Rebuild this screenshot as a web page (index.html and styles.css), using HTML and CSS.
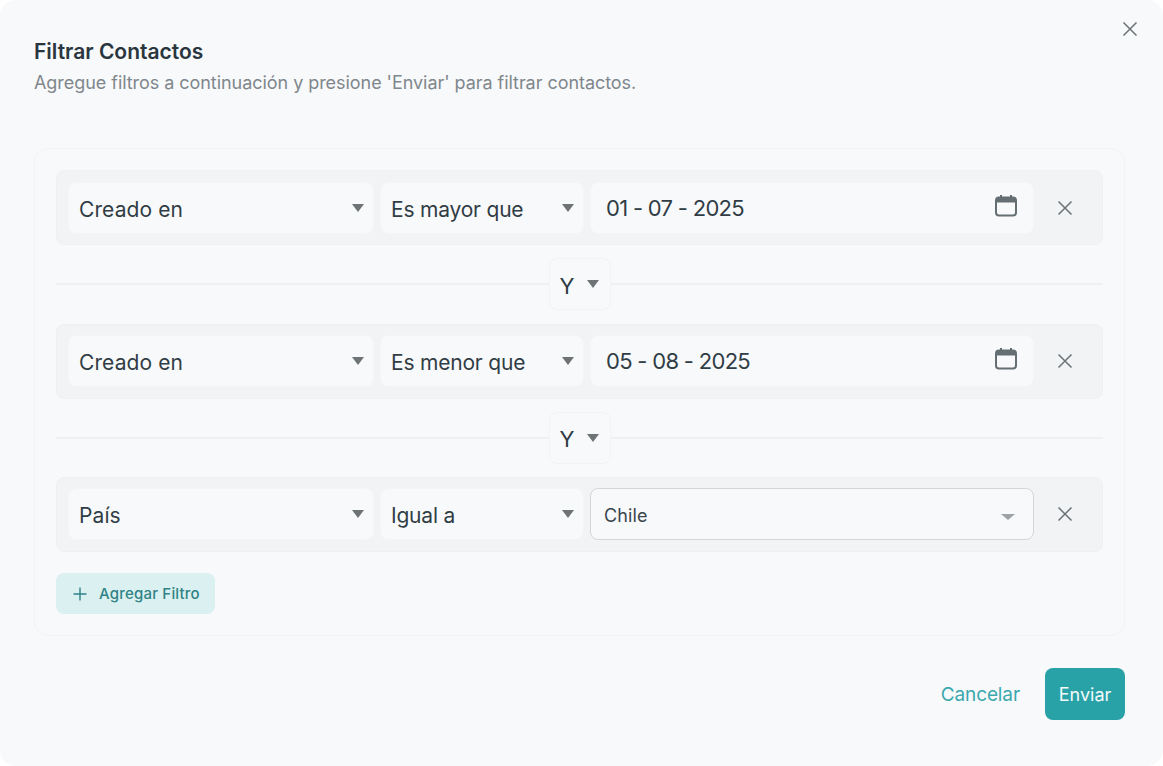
FILE: index.html
```html
<!DOCTYPE html>
<html lang="es">
<head>
<meta charset="utf-8">
<title>Filtrar Contactos</title>
<link rel="stylesheet" href="styles.css">
</head>
<body>
<div class="modal">
  <button class="close" aria-label="Cerrar"><svg width="18" height="18" viewBox="0 0 18 18"><path d="M2.5 2.5l13 13M15.5 2.5l-13 13"/></svg></button>
  <header class="head">
    <h1 class="title">Filtrar Contactos</h1>
    <p class="sub">Agregue filtros a continuación y presione 'Enviar' para filtrar contactos.</p>
  </header>
  <section class="panel">
    <div class="row">
      <div class="field f1"><span>Creado en</span><i class="caret"></i></div>
      <div class="field f2"><span>Es mayor que</span><i class="caret"></i></div>
      <div class="field f3 date"><span>01 - 07 - 2025</span><svg class="cal" width="24" height="24" viewBox="0 0 24 24"><path d="M7 1v3M17 1v3"/><rect x="2" y="3.5" width="20" height="18" rx="3"/><path class="band" d="M2 6.5a3 3 0 0 1 3-3h14a3 3 0 0 1 3 3v2H2z"/></svg></div>
      <button class="rm" aria-label="Quitar"><svg width="18" height="18" viewBox="0 0 18 18"><path d="M2.5 2.5l13 13M15.5 2.5l-13 13"/></svg></button>
    </div>
    <div class="conn"><div class="logic"><span>Y</span><i class="caret"></i></div></div>
    <div class="row">
      <div class="field f1"><span>Creado en</span><i class="caret"></i></div>
      <div class="field f2"><span>Es menor que</span><i class="caret"></i></div>
      <div class="field f3 date"><span>05 - 08 - 2025</span><svg class="cal" width="24" height="24" viewBox="0 0 24 24"><path d="M7 1v3M17 1v3"/><rect x="2" y="3.5" width="20" height="18" rx="3"/><path class="band" d="M2 6.5a3 3 0 0 1 3-3h14a3 3 0 0 1 3 3v2H2z"/></svg></div>
      <button class="rm" aria-label="Quitar"><svg width="18" height="18" viewBox="0 0 18 18"><path d="M2.5 2.5l13 13M15.5 2.5l-13 13"/></svg></button>
    </div>
    <div class="conn"><div class="logic"><span>Y</span><i class="caret"></i></div></div>
    <div class="row">
      <div class="field f1"><span>País</span><i class="caret"></i></div>
      <div class="field f2"><span>Igual a</span><i class="caret"></i></div>
      <div class="field f3 combo"><span>Chile</span><i class="caret light"></i></div>
      <button class="rm" aria-label="Quitar"><svg width="18" height="18" viewBox="0 0 18 18"><path d="M2.5 2.5l13 13M15.5 2.5l-13 13"/></svg></button>
    </div>
    <button class="add"><svg width="16" height="16" viewBox="0 0 16 16"><path d="M8 1.5v13M1.5 8h13"/></svg><span>Agregar Filtro</span></button>
  </section>
  <footer class="foot">
    <button class="cancel">Cancelar</button>
    <button class="send">Enviar</button>
  </footer>
</div>
</body>
</html>
```
FILE: styles.css
```css
* { box-sizing: border-box; }
html, body { margin: 0; height: 100%; background: #fff; }
body { font-family: "Inter", "Open Sans", sans-serif; color: #2f3b43; }
button { font: inherit; border: 0; background: none; padding: 0; cursor: pointer; }
.modal {
  position: relative;
  height: 766px;
  padding: 39px 38px 46px 34px;
  background: #f8f9fb;
  border-radius: 16px;
  overflow: hidden;
}
.close { position: absolute; top: 20px; right: 24px; width: 18px; height: 18px; display: block; }
.close svg, .rm svg { display: block; fill: none; stroke: #6a7276; stroke-width: 1.5; }
.head { height: 109px; }
.title { margin: 0; font-size: 21px; line-height: 25px; font-weight: 600; color: #2a363e; }
.sub { margin: 6px 0 0; font-size: 18px; line-height: 26px; color: #7f878c; letter-spacing: -0.05px; }
.panel {
  height: 488px;
  padding: 21.2px 21px 21px;
  border: 1px solid #f2f3f5;
  border-radius: 14px;
  display: flex;
  flex-direction: column;
  gap: 13.175px;
}
.row {
  height: 75px;
  flex: none;
  padding: 0 10px 0 11px;
  display: flex;
  align-items: center;
  gap: 6px;
  background: #f2f3f5;
  border: 1px solid #eff0f2;
  border-radius: 8px;
}
.field {
  height: 52px;
  flex: none;
  display: flex;
  align-items: center;
  justify-content: space-between;
  padding: 0 9px 0 10px;
  background: #f8f9fb;
  border: 1px solid #f4f5f7;
  border-radius: 8px;
  font-size: 21px;
  color: #313d45;
  letter-spacing: -0.2px;
}
.field > span { padding-top: 3px; }
.f1 { width: 306px; letter-spacing: 0.1px; }
.f2 { width: 204px; }
.f3 { width: 444px; }
.date { padding: 0 15px; font-size: 22px; letter-spacing: -0.7px; }
.date > span { padding-top: 0; }
.combo { border-color: #d4d6d9; padding: 0 18px 0 13px; font-size: 18px; letter-spacing: 0.1px; color: #3a444b; }
.combo > span { padding-top: 2px; }
.caret {
  flex: none;
  width: 0;
  height: 0;
  border-left: 6px solid transparent;
  border-right: 6px solid transparent;
  border-top: 8px solid #6e7376;
}
.caret.light { border-left-width: 7px; border-right-width: 7px; border-top-width: 6px; border-top-color: #9ea2a5; margin-bottom: -5px; }
.cal { flex: none; margin-bottom: 4px; fill: none; stroke: #656e73; stroke-width: 2; }
.cal .band { fill: #656e73; stroke: none; }
.rm { width: 18px; height: 18px; margin-left: 16px; flex: none; }
.conn {
  height: 52px;
  flex: none;
  display: flex;
  justify-content: center;
  align-items: center;
  background: linear-gradient(#eff0f2, #eff0f2) center / 100% 2px no-repeat;
}
.logic {
  width: 62px;
  height: 52px;
  padding: 0 11px 0 10px;
  display: flex;
  align-items: center;
  justify-content: space-between;
  background: #f8f9fb;
  border: 1px solid #f2f3f5;
  border-radius: 8px;
  font-size: 22px;
}
.logic > span { padding-top: 3px; }
.add {
  align-self: flex-start;
  margin-top: 8px;
  width: 159px;
  height: 41px;
  display: flex;
  align-items: center;
  gap: 11px;
  padding-left: 16px;
  background: #dbf0f0;
  border-radius: 8px;
  color: #2f8385;
  font-size: 15px;
  font-weight: 500;
  letter-spacing: 0.2px;
}
.add svg { fill: none; stroke: #2f8385; stroke-width: 1.4; }
.foot { margin-top: 32px; display: flex; justify-content: flex-end; align-items: center; gap: 25px; }
.cancel { font-size: 19px; color: #3aa8ae; letter-spacing: -0.1px; }
.send {
  width: 80px;
  height: 52px;
  background: #29a2a7;
  border-radius: 8px;
  color: #f2fafa;
  font-size: 18px;
}
```
